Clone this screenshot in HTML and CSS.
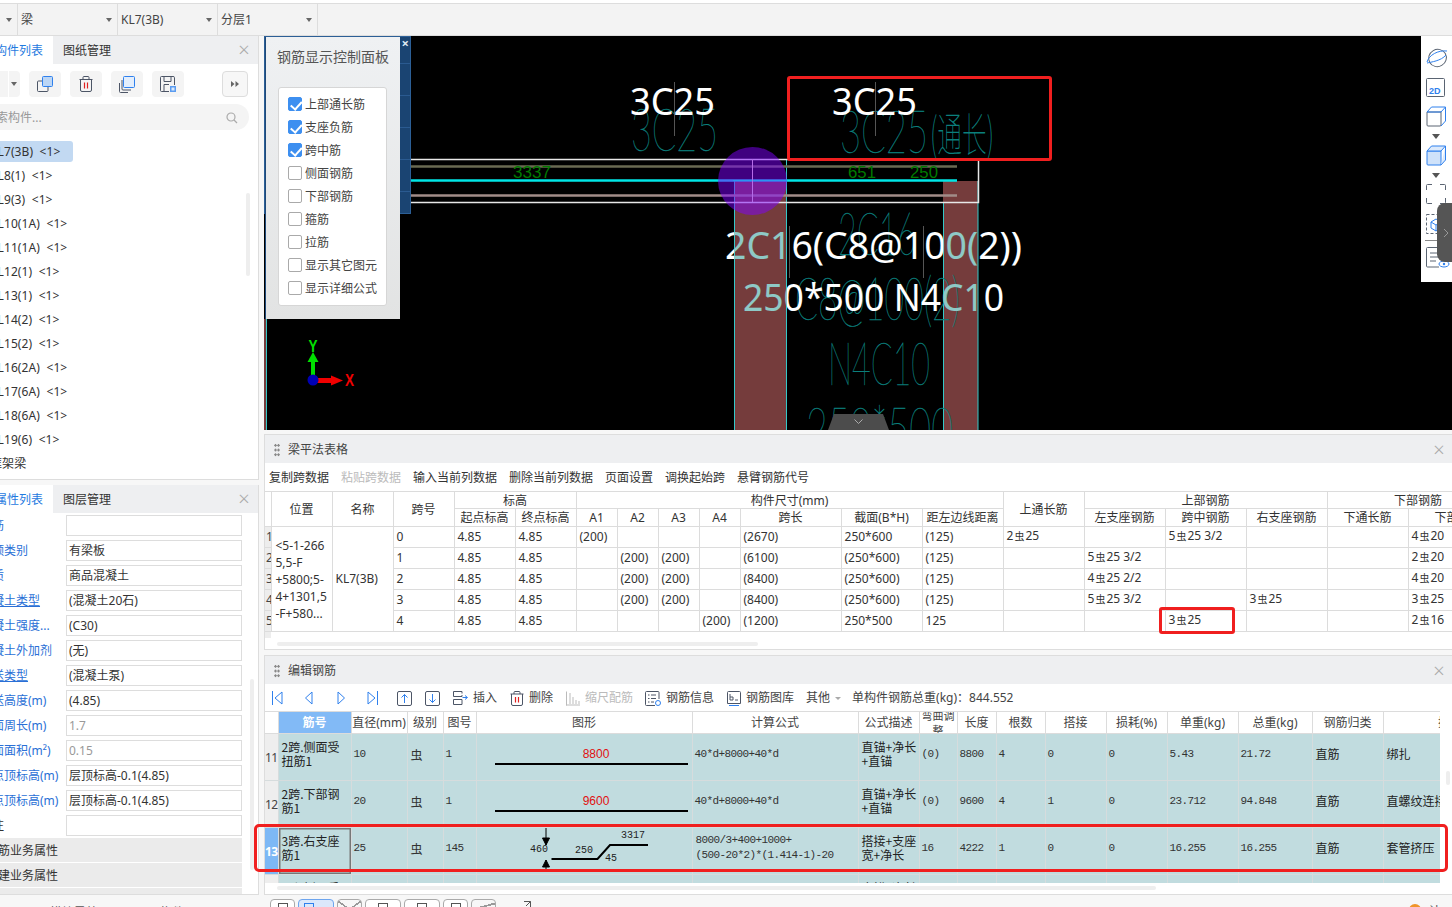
FILE: index.html
```html
<!DOCTYPE html>
<html lang="zh">
<head>
<meta charset="utf-8">
<title>钢筋平法表格</title>
<link rel="stylesheet" href="styles.css">
</head>
<body>
<div class="app">
  <header class="topbar">
    <div class="sel sel-first"><i class="caret"></i></div>
    <div class="sel"><span>梁</span><i class="caret"></i></div>
    <div class="sel"><span>KL7(3B)</span><i class="caret"></i></div>
    <div class="sel"><span>分层1</span><i class="caret"></i></div>
  </header>

  <div class="workspace">
    <aside class="sidebar">
      <section class="side-panel list-panel">
        <div class="tabs">
          <div class="tab active">构件列表</div>
          <div class="tab">图纸管理</div>
          <span class="close">×</span>
        </div>
        <div class="side-tools">
          <div class="tbtn tbtn-cut"><i class="caret"></i></div>
          <div class="tbtn">
            <svg width="16" height="16" viewBox="0 0 16 16"><rect x="5.500" y="0.500" width="10" height="10" rx="1" fill="#bcd6f5" stroke="#2f80ed"/><path d="M5 5H1.500a1 1 0 0 0-1 1v8.500a1 1 0 0 0 1 1H10a1 1 0 0 0 1-1V11" fill="none" stroke="#4c5566"/></svg>
          </div>
          <div class="tbtn">
            <svg width="14" height="16" viewBox="0 0 14 16"><path d="M0.500 3.500H13.500M4 3.500V1.500Q4 .5 5 .5H9Q10 .5 10 1.500V3.500M1.500 3.500V14Q1.500 15.500 3 15.500H11Q12.500 15.500 12.500 14V3.500" fill="none" stroke="#4c5566"/><path d="M5.500 6.500V12.500M8.500 6.500V12.500" stroke="#e02020" stroke-width="1.200"/></svg>
          </div>
          <div class="tbtn">
            <svg width="16" height="17" viewBox="0 0 16 17"><rect x="4.500" y="0.500" width="11" height="11" rx="1" fill="#e3eefc" stroke="#2f80ed"/><path d="M3 4V13Q3 14 4 14H12M.5 7V15.500Q.5 16.500 1.500 16.500H9" fill="none" stroke="#4c5566"/></svg>
          </div>
          <div class="tbtn">
            <svg width="16" height="16" viewBox="0 0 16 16"><path d="M9 15.500H1.500Q.5 15.500 .5 14.500V1.500Q.5 .5 1.500 .5H13Q14.500 .5 14.500 1.500V9M4 .5V5.500H11V.5M4 15.500V8.500H9" fill="none" stroke="#4c5566"/><rect x="10" y="10" width="6" height="6" fill="#5b9cf0"/><rect x="11.500" y="11.500" width="3" height="3" fill="#dce9fb"/></svg>
          </div>
          <div class="tbtn tbtn-more">
            <svg width="8" height="6" viewBox="0 0 8 6"><path d="M0 0 3.500 3 0 6ZM4.500 0 8 3 4.500 6Z" fill="#666"/></svg>
          </div>
        </div>
        <div class="search">
          <span>搜索构件...</span>
          <svg width="12" height="12" viewBox="0 0 12 12"><circle cx="5" cy="5" r="4" fill="none" stroke="#aaa" stroke-width="1.200"/><path d="M8 8 11 11" stroke="#aaa" stroke-width="1.200"/></svg>
        </div>
        <ul class="members">
          <li class="on"><span>KL7(3B)&nbsp; &lt;1&gt;</span></li>
          <li><span>KL8(1)&nbsp; &lt;1&gt;</span></li>
          <li><span>KL9(3)&nbsp; &lt;1&gt;</span></li>
          <li><span>KL10(1A)&nbsp; &lt;1&gt;</span></li>
          <li><span>KL11(1A)&nbsp; &lt;1&gt;</span></li>
          <li><span>KL12(1)&nbsp; &lt;1&gt;</span></li>
          <li><span>KL13(1)&nbsp; &lt;1&gt;</span></li>
          <li><span>KL14(2)&nbsp; &lt;1&gt;</span></li>
          <li><span>KL15(2)&nbsp; &lt;1&gt;</span></li>
          <li><span>KL16(2A)&nbsp; &lt;1&gt;</span></li>
          <li><span>KL17(6A)&nbsp; &lt;1&gt;</span></li>
          <li><span>KL18(6A)&nbsp; &lt;1&gt;</span></li>
          <li><span>KL19(6)&nbsp; &lt;1&gt;</span></li>
          <li><span>框架梁</span></li>
        </ul>
        <i class="vbar vbar-list"></i>
      </section>

      <section class="side-panel prop-panel">
        <div class="tabs">
          <div class="tab active">属性列表</div>
          <div class="tab">图层管理</div>
          <span class="close">×</span>
        </div>
        <div class="prop"><label>钢筋</label><div class="val"></div></div>
        <div class="prop"><label>定额类别</label><div class="val">有梁板</div></div>
        <div class="prop"><label>材质</label><div class="val">商品混凝土</div></div>
        <div class="prop"><label class="ul">混凝土类型</label><div class="val">(混凝土20石)</div></div>
        <div class="prop"><label>混凝土强度...</label><div class="val">(C30)</div></div>
        <div class="prop"><label>混凝土外加剂</label><div class="val">(无)</div></div>
        <div class="prop"><label class="ul">泵送类型</label><div class="val">(混凝土泵)</div></div>
        <div class="prop"><label>泵送高度(m)</label><div class="val">(4.85)</div></div>
        <div class="prop"><label>截面周长(m)</label><div class="val muted">1.7</div></div>
        <div class="prop"><label>截面面积(m²)</label><div class="val muted">0.15</div></div>
        <div class="prop"><label>起点顶标高(m)</label><div class="val">层顶标高-0.1(4.85)</div></div>
        <div class="prop"><label>终点顶标高(m)</label><div class="val">层顶标高-0.1(4.85)</div></div>
        <div class="prop"><label class="plain">备注</label><div class="val"></div></div>
        <div class="group">钢筋业务属性</div>
        <div class="group">土建业务属性</div>
        <div class="group"></div>
        <i class="vbar vbar-prop"></i>
      </section>
    </aside>

    <main class="main">
      <div class="canvas">
        <svg class="cad" width="1188" height="394" viewBox="264 36 1188 394">
          <defs>
            <linearGradient id="over" gradientUnits="userSpaceOnUse" x1="264" y1="0" x2="1452" y2="0">
              <stop offset="0.3956" stop-color="#fff"/><stop offset="0.3956" stop-color="#8ec9c6"/>
              <stop offset="0.4402" stop-color="#8ec9c6"/><stop offset="0.4402" stop-color="#fff"/>
              <stop offset="0.5715" stop-color="#fff"/><stop offset="0.5715" stop-color="#8ec9c6"/>
              <stop offset="0.601" stop-color="#8ec9c6"/><stop offset="0.601" stop-color="#fff"/>
            </linearGradient>
          </defs>
          <rect x="734" y="181" width="53" height="249" fill="#753c3c"/>
          <rect x="943" y="181" width="35" height="249" fill="#753c3c"/>
          <rect x="264" y="319" width="2" height="111" fill="#753c3c"/>
          <path d="M266.500 319V430M734.500 181V430M786.500 159V430M943.500 203V430M978 181V430" stroke="#35c8c8" fill="none"/>
          <path d="M264 159.500H978.500V202.500H264" fill="none" stroke="#e8e8e8" stroke-width="1.500"/>
          <path d="M264 166.500H957" stroke="#6a6a52" stroke-width="2.500"/>
          <path d="M264 195.500H957" stroke="#a28c88" stroke-width="2.500"/>
          <path d="M264 180.500H957" stroke="#00e6e6" stroke-width="2.500"/>
          <text class="green" x="513" y="178" textLength="38" lengthAdjust="spacingAndGlyphs">3337</text>
          <text class="green" x="848" y="178" textLength="28" lengthAdjust="spacingAndGlyphs">651</text>
          <text class="green" x="910" y="178" textLength="28" lengthAdjust="spacingAndGlyphs">250</text>

          <text class="thin" x="631" y="151" textLength="87" lengthAdjust="spacingAndGlyphs">3C25</text>
          <text class="thin" x="840" y="153" textLength="88" lengthAdjust="spacingAndGlyphs">3C25</text>
          <text class="thin-cjk" x="930" y="151" textLength="64" lengthAdjust="spacingAndGlyphs">(通长)</text>
          <text class="thin" x="838" y="255" textLength="78" lengthAdjust="spacingAndGlyphs">2C16</text>
          <text class="thin" x="795" y="320" textLength="165" lengthAdjust="spacingAndGlyphs">C8@100(2)</text>
          <text class="thin" x="828" y="385" textLength="102" lengthAdjust="spacingAndGlyphs">N4C10</text>
          <text class="thin" x="806" y="450" textLength="147" lengthAdjust="spacingAndGlyphs">250*500</text>

          <path d="M674.500 82V136M875.500 82V136M789.500 226V278M923.500 226V278" stroke="#555"/>
          <text class="big white" x="630" y="115" textLength="85" lengthAdjust="spacingAndGlyphs">3C25</text>
          <text class="big white" x="832" y="115" textLength="85" lengthAdjust="spacingAndGlyphs">3C25</text>
          <text class="big" x="725" y="259" textLength="297" lengthAdjust="spacingAndGlyphs" fill="url(#over)">2C16(C8@100(2))</text>
          <text class="big" x="743" y="311" textLength="261" lengthAdjust="spacingAndGlyphs" fill="url(#over)">250*500 N4C10</text>

          <ellipse cx="752.500" cy="181" rx="34.500" ry="34" fill="#8000ff" fill-opacity="0.5"/>
          <path d="M752.500 159V202" stroke="#b56be8"/>
          <path d="M733 180.500H787" stroke="#00e6e6" stroke-opacity=".3"/>

          <rect x="311" y="360" width="4" height="20" fill="#00e000"/>
          <path d="M313 352 318.500 362H307.500Z" fill="#00e000"/>
          <rect x="313" y="378" width="19" height="5" fill="#f00000"/>
          <path d="M343 380.500 331 375.500V385.500Z" fill="#f00000"/>
          <circle cx="313" cy="380" r="5.500" fill="#0000b4"/>
          <text class="axis-y" x="313" y="352" textLength="9" lengthAdjust="spacingAndGlyphs">Y</text>
          <text class="axis-x" x="345" y="386" textLength="9" lengthAdjust="spacingAndGlyphs">X</text>
        </svg>

        <div class="back-panel"><span class="back-x">×</span></div>
        <div class="rebar-panel">
          <div class="rebar-title">钢筋显示控制面板</div>
          <div class="rebar-box">
            <div class="chk on"><i></i>上部通长筋</div>
            <div class="chk on"><i></i>支座负筋</div>
            <div class="chk on"><i></i>跨中筋</div>
            <div class="chk"><i></i>侧面钢筋</div>
            <div class="chk"><i></i>下部钢筋</div>
            <div class="chk"><i></i>箍筋</div>
            <div class="chk"><i></i>拉筋</div>
            <div class="chk"><i></i>显示其它图元</div>
            <div class="chk"><i></i>显示详细公式</div>
          </div>
        </div>

        <div class="view-tools">
          <svg class="t-sphere" width="24" height="20" viewBox="0 0 24 20"><ellipse cx="12.500" cy="10" rx="9" ry="8.500" transform="rotate(-30 12.500 10)" fill="none" stroke="#5a6472"/><path d="M2 14C4 7 13 2 22 3M2 15C6 14 16 13 21 7" fill="none" stroke="#2f80ed"/></svg>
          <svg class="t-2d" width="20" height="20" viewBox="0 0 20 20"><rect x=".5" y=".5" width="18" height="18" rx="1" fill="none" stroke="#5a6472"/><text class="two-d" x="3" y="16">2D</text></svg>
          <svg width="20" height="21" viewBox="0 0 20 21"><path d="M1 6V19Q1 20 2 20H14Q15 20 15 19V6Z" fill="none" stroke="#5a6472"/><path d="M1 6 5.500 1H19.500L15 6ZM15 20 19.500 15V1" fill="none" stroke="#2f80ed"/></svg>
          <i class="caret caret-dark"></i>
          <svg width="20" height="21" viewBox="0 0 20 21"><path d="M1 6H15V20H2Q1 20 1 19Z" fill="#cfe2fa" stroke="#2f80ed"/><path d="M1 6 5.500 1H19.500L15 6ZM15 20 19.500 15V1" fill="#dceafc" stroke="#2f80ed"/></svg>
          <i class="caret caret-dark"></i>
          <svg class="t-corners" width="20" height="20" viewBox="0 0 20 20"><path d="M6 .5H1.500Q.5 .5 .5 1.500V6M14 .5H18.500Q19.500 .5 19.500 1.500V6M6 19.500H1.500Q.5 19.500 .5 18.500V14M14 19.500H18.500Q19.500 19.500 19.500 18.500V14" fill="none" stroke="#5a6472"/></svg>
          <svg width="20" height="20" viewBox="0 0 20 20"><rect x=".5" y=".5" width="19" height="19" fill="none" stroke="#5a6472" stroke-dasharray="3 2"/><path d="M5 8 10 5 15 8V14L10 17 5 14ZM5 8 10 11 15 8M10 11V17" fill="none" stroke="#2f80ed"/></svg>
          <i class="tool-sep"></i>
          <svg width="24" height="21" viewBox="0 0 24 21"><path d="M13 20H1.500Q.5 20 .5 19V1.500Q.5 .5 1.500 .5H17Q18 .5 18 1.500V12M4 6H14M4 10H14M4 14H10" fill="none" stroke="#5a6472"/><ellipse cx="18" cy="17" rx="5" ry="3" fill="#fff" stroke="#2f80ed"/><circle cx="18" cy="17" r="1.200" fill="#2f80ed"/></svg>
        </div>
        <div class="drawer">
          <svg width="6" height="10" viewBox="0 0 6 10"><path d="M1 1 5 5 1 9" fill="none" stroke="#999"/></svg>
        </div>
        <div class="down-tab">
          <svg width="9" height="5" viewBox="0 0 9 5"><path d="M.5 .5 4.500 4.500 8.500 .5" fill="none" stroke="#aaa"/></svg>
        </div>
      </div>

      <section class="dock dock-a">
        <div class="dock-head"><i class="grip"></i><span>梁平法表格</span><span class="close">×</span></div>
        <div class="text-tools">
          <span>复制跨数据</span><span class="off">粘贴跨数据</span><span>输入当前列数据</span><span>删除当前列数据</span><span>页面设置</span><span>调换起始跨</span><span>悬臂钢筋代号</span>
        </div>
        <div class="grid-a">
          <table class="sheet sheet-a">
            <colgroup>
              <col class="w6"><col class="w61"><col class="w61"><col class="w61"><col class="w61"><col class="w61">
              <col class="w41"><col class="w41"><col class="w41"><col class="w41"><col class="w101">
              <col class="w81"><col class="w81"><col class="w81"><col class="w81"><col class="w81"><col class="w81"><col class="w81"><col class="w101">
            </colgroup>
            <thead>
              <tr class="h17">
                <th rowspan="2" class="gut-head"></th><th rowspan="2">位置</th><th rowspan="2">名称</th><th rowspan="2">跨号</th>
                <th colspan="2">标高</th><th colspan="7">构件尺寸(mm)</th>
                <th rowspan="2">上通长筋</th><th colspan="3">上部钢筋</th><th colspan="2">下部钢筋</th>
              </tr>
              <tr class="h18">
                <th>起点标高</th><th>终点标高</th><th>A1</th><th>A2</th><th>A3</th><th>A4</th><th>跨长</th><th>截面(B*H)</th><th>距左边线距离</th>
                <th>左支座钢筋</th><th>跨中钢筋</th><th>右支座钢筋</th><th>下通长筋</th><th>下部钢筋</th>
              </tr>
            </thead>
            <tbody>
              <tr><td class="gut">1</td><td rowspan="5" class="pos">&lt;5-1-266<br>5,5-F<br>+5800;5-<br>4+1301,5<br>-F+580...</td><td rowspan="5" class="name">KL7(3B)</td><td>0</td><td>4.85</td><td>4.85</td><td>(200)</td><td></td><td></td><td></td><td>(2670)</td><td>250*600</td><td>(125)</td><td class="rb">2<b class="bar">虫</b>25</td><td></td><td class="rb">5<b class="bar">虫</b>25 3/2</td><td></td><td></td><td class="rb">4<b class="bar">虫</b>20</td></tr>
              <tr><td class="gut">2</td><td>1</td><td>4.85</td><td>4.85</td><td></td><td>(200)</td><td>(200)</td><td></td><td>(6100)</td><td>(250*600)</td><td>(125)</td><td></td><td class="rb">5<b class="bar">虫</b>25 3/2</td><td></td><td></td><td></td><td class="rb">2<b class="bar">虫</b>20</td></tr>
              <tr><td class="gut">3</td><td>2</td><td>4.85</td><td>4.85</td><td></td><td>(200)</td><td>(200)</td><td></td><td>(8400)</td><td>(250*600)</td><td>(125)</td><td></td><td class="rb">4<b class="bar">虫</b>25 2/2</td><td></td><td></td><td></td><td class="rb">4<b class="bar">虫</b>20</td></tr>
              <tr><td class="gut">4</td><td>3</td><td>4.85</td><td>4.85</td><td></td><td>(200)</td><td>(200)</td><td></td><td>(8400)</td><td>(250*600)</td><td>(125)</td><td></td><td class="rb">5<b class="bar">虫</b>25 3/2</td><td></td><td class="rb">3<b class="bar">虫</b>25</td><td></td><td class="rb">3<b class="bar">虫</b>25</td></tr>
              <tr><td class="gut">5</td><td>4</td><td>4.85</td><td>4.85</td><td></td><td></td><td></td><td>(200)</td><td>(1200)</td><td>250*500</td><td>125</td><td></td><td></td><td class="rb">3<b class="bar">虫</b>25</td><td></td><td></td><td class="rb">2<b class="bar">虫</b>16</td></tr>
              <tr class="tail"><td class="gut"></td></tr>
            </tbody>
          </table>
        </div>
        <i class="hbar hbar-a"></i>
      </section>

      <section class="dock dock-b">
        <div class="dock-head"><i class="grip"></i><span>编辑钢筋</span><span class="close">×</span></div>
        <div class="rebar-tools">
          <svg class="nav" width="16" height="16" viewBox="0 0 16 16"><path d="M3.500 1V15M13 2 6 8 13 14Z" fill="none" stroke="#2f80ed"/></svg>
          <svg class="nav" width="16" height="16" viewBox="0 0 16 16"><path d="M11 2 4.500 8 11 14Z" fill="none" stroke="#2f80ed"/></svg>
          <svg class="nav" width="16" height="16" viewBox="0 0 16 16"><path d="M5 2 11.500 8 5 14Z" fill="none" stroke="#2f80ed"/></svg>
          <svg class="nav" width="16" height="16" viewBox="0 0 16 16"><path d="M12.500 1V15M3 2 10 8 3 14Z" fill="none" stroke="#2f80ed"/></svg>
          <svg class="m0" width="15" height="15" viewBox="0 0 15 15"><rect x=".5" y=".5" width="14" height="14" rx="1.500" fill="none" stroke="#4c5566"/><path d="M7.500 12V3.500M4.500 6.500 7.500 3.500 10.500 6.500" fill="none" stroke="#2f80ed"/></svg>
          <svg class="m13" width="15" height="15" viewBox="0 0 15 15"><rect x=".5" y=".5" width="14" height="14" rx="1.500" fill="none" stroke="#4c5566"/><path d="M7.500 3V11.500M4.500 8.500 7.500 11.500 10.500 8.500" fill="none" stroke="#2f80ed"/></svg>
          <svg class="m13" width="15" height="14" viewBox="0 0 15 14"><path d="M9 2.500V.5H.5V5.500H9V4M.5 8.500H9V13.500H.5Z" fill="none" stroke="#4c5566"/><path d="M9.500 6.500H14M12 4.500 14.500 6.500 12 8.500" fill="none" stroke="#2f80ed"/></svg>
          <span class="m5">插入</span>
          <svg class="m13" width="14" height="15" viewBox="0 0 14 15"><path d="M.5 3H13.500M4 3V1.500Q4 .5 5 .5H9Q10 .5 10 1.500V3M1.500 3V13Q1.500 14.500 3 14.500H11Q12.500 14.500 12.500 13V3" fill="none" stroke="#4c5566"/><path d="M5.500 6V11.500M8.500 6V11.500" stroke="#e02020" stroke-width="1.200"/></svg>
          <span class="m5">删除</span>
          <svg class="m13" width="14" height="15" viewBox="0 0 14 15"><path d="M.5 .5V14.500M4 2V13M7 6V13M10 9V13M13 10V13M0 14H14" stroke="#bbb" fill="none"/></svg>
          <span class="m5 off">缩尺配筋</span>
          <svg class="m12" width="16" height="15" viewBox="0 0 16 15"><path d="M10 14.500H1.500Q.5 14.500 .5 13.500V1.500Q.5 .5 1.500 .5H13Q14 .5 14 1.500V8M3 4H4.500M6 4H11M3 7.500H4.500M6 7.500H11M3 11H4.500M6 11H9" fill="none" stroke="#4c5566"/><circle cx="13" cy="12" r="2.500" fill="none" stroke="#2f80ed"/></svg>
          <span class="m5">钢筋信息</span>
          <svg class="m13" width="14" height="15" viewBox="0 0 14 15"><path d="M1.500 .5H12.500Q13.500 .5 13.500 1.500V12.500H.5V1.500Q.5 .5 1.500 .5ZM3 3V9H6V6H3M8 9H11" fill="none" stroke="#4c5566"/><path d="M2 14.500H12" stroke="#2f80ed"/></svg>
          <span class="m5">钢筋图库</span>
          <span class="m12">其他</span>
          <i class="caret caret-sm m5"></i>
          <span class="m11">单构件钢筋总重(kg)：844.552</span>
        </div>
        <div class="grid-b">
          <table class="sheet sheet-b">
            <colgroup>
              <col class="w13"><col class="w73"><col class="w56"><col class="w36"><col class="w33"><col class="w216"><col class="w166"><col class="w61"><col class="w38"><col class="w39"><col class="w49"><col class="w61"><col class="w61"><col class="w71"><col class="w74"><col class="w71"><col class="w158">
            </colgroup>
            <thead>
              <tr class="h21">
                <th class="gut-blank"></th><th class="sel-head">筋号</th><th>直径(mm)</th><th>级别</th><th>图号</th><th>图形</th><th>计算公式</th><th>公式描述</th><th class="wrapped"><div>弯曲调整</div></th><th>长度</th><th>根数</th><th>搭接</th><th>损耗(%)</th><th>单重(kg)</th><th>总重(kg)</th><th>钢筋归类</th><th>搭接形式</th>
              </tr>
            </thead>
            <tbody>
              <tr>
                <td class="gut">11</td><td class="cjk">2跨.侧面受<br>扭筋1</td><td>10</td><td class="c-bar">虫</td><td>1</td>
                <td class="fig"><svg width="216" height="46" viewBox="0 1 216 46"><text class="dim-red" x="119" y="25">8800</text><rect x="18" y="30" width="193" height="2" fill="#000"/></svg></td>
                <td>40*d+8000+40*d</td><td class="cjk">直锚+净长<br>+直锚</td><td>(0)</td><td>8800</td><td>4</td><td>0</td><td>0</td><td>5.43</td><td>21.72</td><td class="cjk">直筋</td><td class="cjk">绑扎</td>
              </tr>
              <tr>
                <td class="gut">12</td><td class="cjk">2跨.下部钢<br>筋1</td><td>20</td><td class="c-bar">虫</td><td>1</td>
                <td class="fig"><svg width="216" height="46" viewBox="0 1 216 46"><text class="dim-red" x="119" y="25">9600</text><rect x="18" y="30" width="193" height="2" fill="#000"/></svg></td>
                <td>40*d+8000+40*d</td><td class="cjk">直锚+净长<br>+直锚</td><td>(0)</td><td>9600</td><td>4</td><td>1</td><td>0</td><td>23.712</td><td>94.848</td><td class="cjk">直筋</td><td class="cjk">直螺纹连接</td>
              </tr>
              <tr>
                <td class="gut gut-on">13</td><td class="cjk cell-on">3跨.右支座<br>筋1</td><td>25</td><td class="c-bar">虫</td><td>145</td>
                <td class="fig"><svg width="216" height="46" viewBox="0 0 216 46">
                  <path d="M74.500 31 91 31 120.500 31 133 17H171" fill="none" stroke="#000" stroke-width="2"/>
                  <path d="M69 0V17M65.500 10H72.500L69 17ZM69 32V44M65.500 39H72.500L69 32Z" fill="#000" stroke="#000"/>
                  <text class="dim" x="156" y="10">3317</text><text class="dim" x="107" y="25">250</text><text class="dim" x="134" y="33">45</text><text class="dim" x="62" y="24">460</text>
                </svg></td>
                <td class="formula">8000/3+400+1000+<br>(500-20*2)*(1.414-1)-20</td><td class="cjk">搭接+支座<br>宽+净长</td><td>16</td><td>4222</td><td>1</td><td>0</td><td>0</td><td>16.255</td><td>16.255</td><td class="cjk">直筋</td><td class="cjk">套管挤压</td>
              </tr>
              <tr>
                <td class="gut">14</td><td class="cjk">2跨.侧面受<br>扭筋1</td><td></td><td></td><td></td><td class="fig"></td><td></td><td class="cjk">直锚+净长<br>+直锚</td><td></td><td></td><td></td><td></td><td></td><td></td><td></td><td></td><td></td>
              </tr>
            </tbody>
          </table>
        </div>
        <i class="hbar hbar-b"></i>
        <i class="vbar vbar-b"></i>
      </section>
    </main>
  </div>

  <footer class="footbar">
    <div class="foot-left"><span>模块导航</span><span>构件显示</span></div>
    <div class="foot-btns">
      <div class="fbtn w25"><i></i></div>
      <div class="fbtn w36 active"><i></i></div>
      <div class="fbtn w25 cross"></div>
      <div class="fbtn w36"><i></i></div>
      <div class="fbtn w36"><i></i></div>
      <div class="fbtn w25"><i></i></div>
      <div class="fbtn w25 slant"></div>
      <svg class="foot-arrow" width="8" height="6" viewBox="0 0 8 6"><path d="M1 .5H7.500V6M7.500 .5 3 5" fill="none" stroke="#555"/></svg>
    </div>
    <div class="foot-right"><i class="dot"></i><span>计算</span></div>
  </footer>

  <i class="mark mark-a"></i>
  <i class="mark mark-b"></i>
  <i class="mark mark-c"></i>
</div>
</body>
</html>
```

FILE: styles.css
```css
* { box-sizing: border-box; }
html, body { margin: 0; padding: 0; height: 100%; overflow: hidden; }
body {
  font: 12px/16px "Noto Sans", "Noto Sans CJK SC", sans-serif;
  color: #333;
  background: #fff;
}
i { display: block; }
.app { position: relative; width: 1452px; height: 907px; overflow: hidden; background: #f7f7f7; }

.caret { width: 0; height: 0; border: 3.500px solid transparent; border-top: 4px solid #666; border-bottom: 0; }
.caret-dark { border-top-color: #555; border-left-width: 4px; border-right-width: 4px; border-top-width: 5px; }
.caret-sm { border-top-color: #aaa; border-width: 3px; border-bottom: 0; }

/* top */
.topbar {
  height: 36px;
  display: flex;
  border-top: 3px solid #fff;
  border-bottom: 1px solid #ddd;
  background: #f3f3f3;
  box-shadow: inset 0 1px 0 #ddd;
}
.sel { width: 100px; display: flex; align-items: center; justify-content: space-between; padding: 1px 5px 0 3px; border-right: 1px solid #ddd; color: #444; }
.sel-first { width: 18px; justify-content: flex-end; }

.workspace { display: flex; height: 859px; }

/* sidebar */
.sidebar { width: 259px; flex: none; display: flex; flex-direction: column; gap: 5px; }
.side-panel { position: relative; background: #fff; overflow: hidden; border-right: 1px solid #ddd; border-bottom: 1px solid #ddd; }
.list-panel { height: 444px; }
.prop-panel { height: 410px; }
.tabs { height: 28px; display: flex; align-items: center; background: #eeeff1; }
.tab { padding: 1px 10px 0; height: 28px; line-height: 28px; color: #333; }
.tab.active { width: 53px; padding: 1px 0 0; margin-right: 0; background: #fff; color: #1f7ae0; text-indent: -5px; white-space: nowrap; }
.close { margin-left: auto; margin-right: 7px; width: 14px; text-align: center; font-size: 20px; font-weight: 300; color: #aaa; line-height: 20px; }

.side-tools { height: 40px; display: flex; align-items: center; gap: 9px; padding-top: 0; }
.tbtn { width: 32px; height: 26px; border-radius: 4px; background: #f4f4f4; display: flex; align-items: center; justify-content: center; }
.tbtn-cut { width: 20px; border-radius: 0 4px 4px 0; position: relative; justify-content: flex-end; padding-right: 3px; box-shadow: inset 8px 0 0 #f4f4f4, inset 9px 0 0 #fff; }
.tbtn-more { margin-left: 29px; width: 26px; background: #f7f7f7; border: 1px solid #ddd; }
.search { height: 26px; width: 249px; display: flex; align-items: center; justify-content: space-between; border-radius: 0 13px 13px 0; background: #f4f4f4; color: #999; padding: 1px 11px 0 0; white-space: nowrap; }
.search span { margin-left: -16px; }
.members { list-style: none; margin: 9px 0 0 -20px; padding: 0; }
.members li { height: 24px; display: flex; align-items: center; white-space: nowrap; letter-spacing: .1px; }
.members span { padding: 0 12px 0 10px; height: 21px; line-height: 21px; border-radius: 3px; }
.members .on span { background: #c2d9f2; width: 93px; }
.vbar { position: absolute; width: 4px; background: #eee; border-radius: 2px; }
.vbar-list { left: 246px; top: 157px; height: 83px; }
.vbar-prop { left: 250px; top: 194px; height: 191px; }

.prop { height: 25px; display: flex; align-items: center; }
.prop label { width: 86px; flex: none; margin-left: -20px; color: #2a6fd6; white-space: nowrap; }
.prop label.ul { text-decoration: underline; }
.prop label.plain { color: #333; }
.val { width: 176px; height: 21px; line-height: 19px; border: 1px solid #ddd; padding-left: 2px; background: #fff; white-space: nowrap; }
.val.muted { color: #999; }
.group { width: 242px; height: 24px; margin-bottom: 1px; line-height: 25px; text-indent: -14px; background: #ebebeb; white-space: nowrap; }

/* main */
.main { width: 1188px; margin-left: 5px; flex: none; display: flex; flex-direction: column; }
.canvas { position: relative; height: 394px; background: #000; overflow: hidden; flex: none; }
.cad { display: block; }
.green { font: 16px "Liberation Sans", sans-serif; fill: #007a00; }
.thin { font: 100 60px "Lato", "Liberation Sans", sans-serif; fill: #0b7f7c; stroke: #0b7f7c; stroke-width: .4px; }
.thin-cjk { font: 100 46px "Noto Sans CJK SC", sans-serif; fill: #0b7f7c; }
.big { font: 38px "Noto Sans", sans-serif; }
.white { fill: #fff; }
.axis-y { font: 700 16px "Liberation Sans", sans-serif; fill: #00e000; text-anchor: middle; }
.axis-x { font: 700 16px "Liberation Sans", sans-serif; fill: #f00000; }

.back-panel { position: absolute; left: 0; top: 0; width: 147px; height: 178px; background: repeating-linear-gradient(#1a4472 0 26px, #2a5a90 26px 27px, #1a4472 27px 32px); border: 1px solid #2c5f96; }
.back-x { position: absolute; right: 1px; top: -1px; color: #dfe8f2; font-size: 13px; font-weight: 700; line-height: 14px; }
.rebar-panel { position: absolute; left: 1px; top: 1px; width: 135px; height: 282px; padding: 12px 12px 0; background: linear-gradient(#eff1f3, #e2e3e3); border-left: 1px solid #1f4a7a; }
.rebar-title { font-size: 14px; line-height: 16px; color: #555; white-space: nowrap; margin-left: -1px; }
.rebar-box { margin-top: 22px; width: 109px; height: 219px; background: #fff; border: 1px solid #d6d6d6; border-radius: 3px; padding: 5px 0 0 9px; }
.chk { height: 23px; display: flex; align-items: center; gap: 3px; color: #444; white-space: nowrap; }
.chk i { width: 14px; height: 14px; margin-top: -1px; border: 1px solid #aaa; border-radius: 2px; background: #fff; position: relative; }
.chk.on i { background: #3d8ff0; border-color: #3d8ff0; }
.chk.on i::after { content: ""; position: absolute; left: 3.500px; top: 1px; width: 5px; height: 8.500px; border: solid #fff; border-width: 0 2px 2px 0; transform: rotate(42deg); }

.view-tools { position: absolute; right: 0; top: 0; width: 31px; height: 246px; background: #fff; display: flex; flex-direction: column; align-items: flex-start; padding: 12px 0 0 5px; }
.view-tools svg { display: block; flex: none; }
.t-sphere { margin-left: -1px; margin-bottom: 10px; }
.t-2d { margin-bottom: 8px; }
.view-tools .caret-dark { margin: 7px 0 6px 6px; }
.t-corners { margin-bottom: 10px; }
.tool-sep { width: 26px; height: 1px; background: #888; margin: 6px 0 6px -1px; }
.two-d { font: 700 9px "Liberation Sans", sans-serif; fill: #2f80ed; }
.drawer { position: absolute; right: 0; top: 167px; width: 15px; height: 59px; border-radius: 8px 0 0 8px; background: #555; display: flex; align-items: center; padding-left: 6px; }
.down-tab { position: absolute; left: 564px; bottom: 0; width: 61px; height: 16px; background: #4c4c4c; clip-path: polygon(6px 0, 55px 0, 61px 100%, 0 100%); display: flex; justify-content: center; padding-top: 5px; }

/* docks */
.dock { position: relative; background: #fff; border: 1px solid #ddd; border-width: 1px 0 1px 1px; overflow: hidden; }
.dock-a { height: 216px; margin-top: 4px; }
.dock-b { height: 240px; margin-top: 5px; }
.dock-head { height: 28px; display: flex; align-items: center; background: #eeeff1; padding: 1px 0 0 9px; color: #444; }
.dock-head .close { margin-right: 6px; }
.grip { width: 6px; height: 14px; margin-right: 8px; background: radial-gradient(circle, #888 1.200px, transparent 1.400px) 0 0 / 3px 4.700px; }
.text-tools { height: 28px; display: flex; align-items: center; gap: 12px; padding: 1px 0 0 4px; white-space: nowrap; }
.off { color: #bbb; }
.grid-a { height: 147px; overflow: hidden; }
.grid-b { height: 172px; width: 1175px; overflow: hidden; }
.sheet { table-layout: fixed; border-collapse: collapse; border-spacing: 0; }
.sheet-a { width: 1244px; }
.sheet-b { width: 1276px; }
.sheet th, .sheet td { border: 1px solid #dcdcdc; padding: 0 0 0 3px; overflow: hidden; white-space: nowrap; font-weight: 400; }
.sheet th { padding: 0; text-align: center; }
.sheet-a td { height: 21px; line-height: 14px; }
.sheet-a td.rb { padding-bottom: 3px; }
.h17 th { height: 17px; line-height: 14px; padding-top: 1px; }
.h18 th { height: 18px; line-height: 14px; }
.gut-head { border-left: 0 !important; }
.sheet td.gut { padding: 0 0 0 1px; background: #ededed; border-left: 0; color: #444; }
.sheet-a td.pos { padding-left: 4px; line-height: 17px; white-space: normal; }
.sheet-a td.name { padding-left: 3px; }
.tail td { height: 8px !important; border: 0 !important; }
.bar { font-weight: 400; font-size: 10px; margin: 0 1px; }

.w6 { width: 6px; } .w13 { width: 13px; } .w33 { width: 33px; } .w36 { width: 36px; } .w38 { width: 38px; } .w39 { width: 39px; } .w41 { width: 41px; } .w49 { width: 49px; } .w56 { width: 56px; } .w61 { width: 61px; } .w71 { width: 71px; } .w73 { width: 73px; } .w74 { width: 74px; } .w81 { width: 81px; } .w101 { width: 101px; } .w158 { width: 158px; } .w166 { width: 166px; } .w216 { width: 216px; }

.hbar { position: absolute; height: 4px; background: #eee; border-radius: 2px; }
.hbar-a { left: 12px; top: 207px; width: 481px; }
.hbar-b { left: 12px; top: 230px; width: 879px; }
.vbar-b { left: 1181px; top: 115px; height: 14px; }

.rebar-tools { height: 27px; display: flex; align-items: center; padding: 1px 0 0 4px; white-space: nowrap; color: #444; }
.rebar-tools svg { flex: none; display: block; }
.nav { margin-right: 16px; }
.m0 { margin-left: 0; } .m5 { margin-left: 5px; } .m11 { margin-left: 11px; } .m12 { margin-left: 12px; } .m13 { margin-left: 13px; }

.sheet-b { font: 11px/14px "Liberation Mono", monospace; letter-spacing: -.6px; }
.sheet-b th { font: 12px/14px "Noto Sans", "Noto Sans CJK SC", sans-serif; letter-spacing: 0; height: 21px; color: #444; }
.sheet-b td { height: 46px; background: #c1dcdf; border-color: #d6dcdd; padding: 0 0 6px 2px; }
.sheet-b td.gut { background: #eee; font: 12px "Noto Sans", sans-serif; padding: 0; text-align: center; letter-spacing: -.5px; overflow: visible; }
.sheet-b td.gut-on { background: #7db8f5; color: #fff; font-weight: 700; }
.sheet-b .cjk { font: 12px/14px "Noto Sans CJK SC", sans-serif; letter-spacing: 0; padding: 0 0 6px 3px; color: #222; }
.sheet-b .formula { line-height: 15px; padding-left: 3px; }
.sheet-b .cell-on { box-shadow: inset 0 0 0 1.500px #777; }
.sheet-b .c-bar { font: 12px "Noto Sans CJK SC", sans-serif; letter-spacing: 0; padding: 0 0 5px 3px; }
.sheet-b td.fig { padding: 0; }
.fig svg { display: block; }
.sel-head { background: #82baf6; color: #fff !important; font-weight: 700 !important; }
.gut-blank { border-left: 0 !important; }
.wrapped div { height: 21px; display: flex; align-items: center; justify-content: center; white-space: normal; overflow: hidden; line-height: 15px; font-size: 11px; }
.dim-red { font: 12px "Liberation Sans", sans-serif; fill: #e01010; text-anchor: middle; letter-spacing: 0; }
.dim { font: 10px "Liberation Mono", monospace; fill: #222; text-anchor: middle; letter-spacing: 0; }

/* foot */
.footbar { height: 12px; display: flex; align-items: flex-start; overflow: hidden; position: relative; }
.foot-left { width: 270px; display: flex; flex: none; padding: 10px 0 0 50px; gap: 62px; color: #555; white-space: nowrap; }
.foot-btns { display: flex; padding-top: 4px; gap: 3px; align-items: flex-start; }
.fbtn { height: 20px; border: 1px solid #aaa; border-radius: 4px 4px 0 0; background: #fff; position: relative; }
.fbtn.w25 { width: 25px; } .fbtn.w36 { width: 36px; }
.fbtn i { width: 10px; height: 4px; margin: 3px auto 0; border: 1px solid #555; border-bottom: 0; }
.fbtn.active { background: #dbe8fb; border-color: #6ea5ee; }
.fbtn.active i { border-color: #2f80ed; margin-left: 5px; }
.fbtn.cross { background: linear-gradient(35deg, transparent 46%, #999 46%, #999 52%, transparent 52%), linear-gradient(-35deg, transparent 46%, #999 46%, #999 52%, transparent 52%); }
.fbtn.slant { background: linear-gradient(165deg, transparent 36%, #999 36%, #999 44%, transparent 44%); }
.foot-arrow { margin: 2px 0 0 24px; display: block; }
.foot-right { position: absolute; left: 1409px; top: 9px; display: flex; gap: 8px; color: #555; }
.dot { width: 12px; height: 12px; border-radius: 50%; background: #f0952a; }

/* red annotation frames */
.mark { position: absolute; border: 3px solid #f01f1f; border-radius: 3px; pointer-events: none; }
.mark-a { left: 787px; top: 76px; width: 265px; height: 85px; }
.mark-b { left: 1159px; top: 607px; width: 76px; height: 27px; }
.mark-c { left: 254px; top: 824px; width: 1194px; height: 48px; border-radius: 5px; }
```
